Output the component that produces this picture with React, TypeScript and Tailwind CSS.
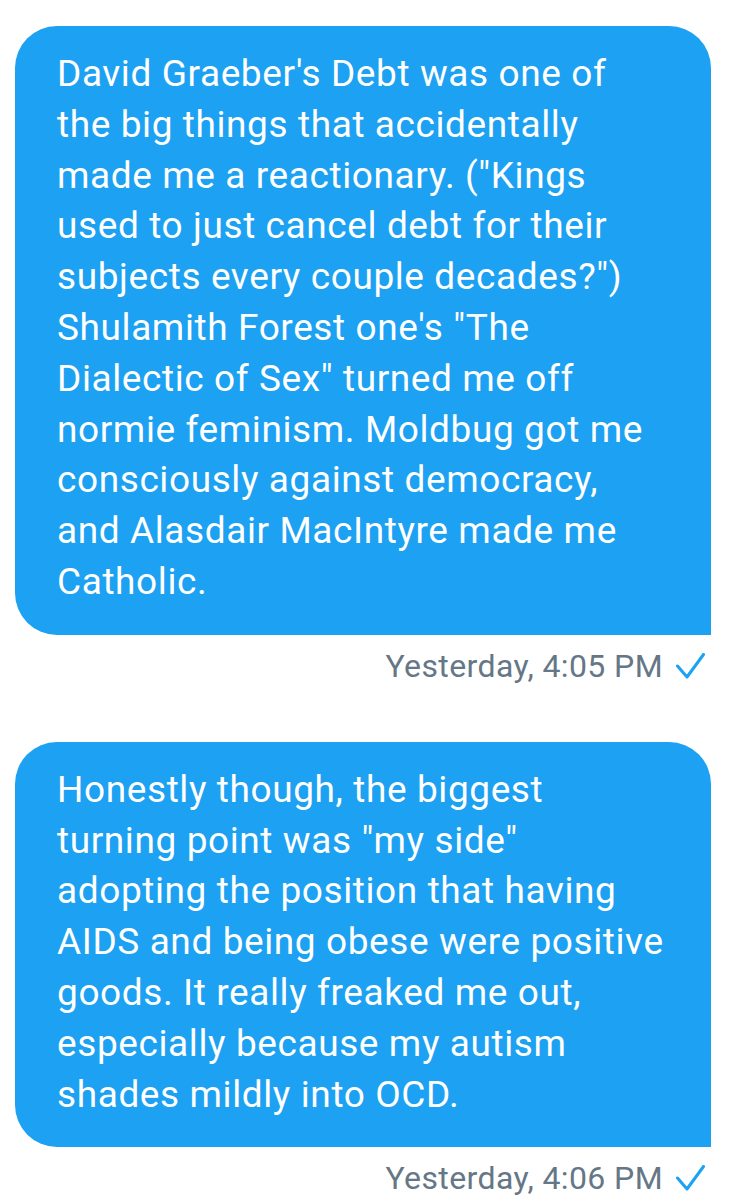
import React from "react";

const msg1 = [
  "David Graeber's Debt was one of",
  "the big things that accidentally",
  "made me a reactionary. (\"Kings",
  "used to just cancel debt for their",
  "subjects every couple decades?\")",
  "Shulamith Forest one's \"The",
  "Dialectic of Sex\" turned me off",
  "normie feminism. Moldbug got me",
  "consciously against democracy,",
  "and Alasdair MacIntyre made me",
  "Catholic.",
];

const msg2 = [
  "Honestly though, the biggest",
  "turning point was \"my side\"",
  "adopting the position that having",
  "AIDS and being obese were positive",
  "goods. It really freaked me out,",
  "especially because my autism",
  "shades mildly into OCD.",
];

function Check() {
  return (
    <svg width="29" height="26" viewBox="0 0 29 26" className="ml-[13px]">
      <path d="M1.5 13 L11 24 L27.5 1.5" fill="none" stroke="#1da1f2" strokeWidth="3" strokeLinecap="round" strokeLinejoin="round" />
    </svg>
  );
}

function Bubble({ lines }: { lines: string[] }) {
  return (
    <div className="ml-[15px] w-[696px] rounded-tl-[42px] rounded-tr-[42px] rounded-bl-[42px] rounded-br-none bg-[#1da1f2] pl-[42px] pr-4 pt-[23px] pb-[27px] text-white text-[37px] tracking-[0.6px] leading-[50.8px]">
      {lines.map((l, i) => (
        <div key={i} className="whitespace-nowrap">{l}</div>
      ))}
    </div>
  );
}

function Stamp({ text }: { text: string }) {
  return (
    <div className="flex items-center justify-end pr-[47px] mt-[11px] h-[40px] text-[32px] tracking-[0.4px] leading-[40px] text-[#657786]">
      <span>{text}</span>
      <Check />
    </div>
  );
}

export default function App() {
  return (
    <div className="w-[752px] h-[1200px] bg-white overflow-hidden pt-[26px]" style={{ fontFamily: "Roboto, 'Noto Sans', sans-serif" }}>
      <Bubble lines={msg1} />
      <Stamp text="Yesterday, 4:05 PM" />
      <div className="h-[56px]" />
      <Bubble lines={msg2} />
      <Stamp text="Yesterday, 4:06 PM" />
    </div>
  );
}
